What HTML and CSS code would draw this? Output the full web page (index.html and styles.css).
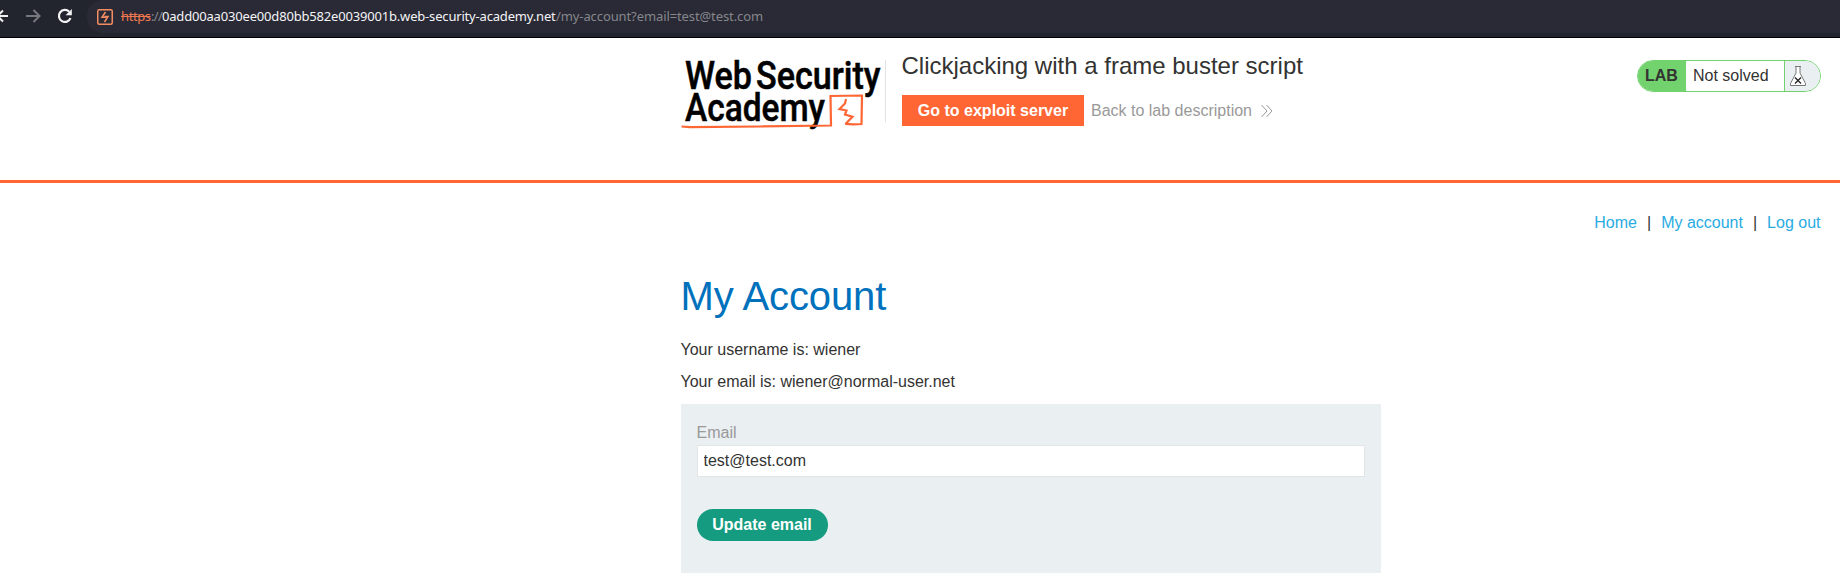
FILE: index.html
```html
<!DOCTYPE html>
<html lang="en">
<head>
<meta charset="utf-8">
<title>Clickjacking with a frame buster script</title>
<link rel="stylesheet" href="styles.css">
</head>
<body>
<div class="browser">
  <div class="browser-buttons">
    <svg class="nav-icons" width="87" height="33" viewBox="0 0 87 33" fill="none" stroke-width="2">
      <path d="M8 16H-4M3 10.500L-2.500 16L3 21.500" stroke="#f0f0f2"/>
      <path d="M26 16H39M33.500 10L39.500 16L33.500 22" stroke="#77787e"/>
      <path d="M70.500 18.200A6 6 0 1 1 69.200 11.700" stroke="#f4f4f6" stroke-width="2.200"/>
      <path d="M71.800 9V15.200H65.600Z" fill="#f4f4f6"/>
    </svg>
  </div>
  <div class="address">
    <svg class="site-icon" width="16" height="16" viewBox="0 0 16 16" fill="none" stroke="#f58c63">
      <rect x=".75" y=".75" width="14.500" height="14.500" rx="1.500" stroke-width="1.500"/>
      <path d="M8.500 3L5 8.300H8.300V7.500H11L7.500 13" stroke-width="1.500"/>
    </svg>
    <span class="scheme">https</span><span class="dim sep">://</span><span class="host">0add00aa030ee00d80bb582e0039001b.web-security-academy.net</span><span class="dim path">/my-account?email=test@test.com</span>
  </div>
</div>
<header class="lab-header">
  <svg class="logo" width="204" height="72" viewBox="681 58 204 72">
    <g class="logo-text">
      <text x="685" y="88.500" textLength="67" lengthAdjust="spacingAndGlyphs">Web</text>
      <text x="756" y="88.500" textLength="124.500" lengthAdjust="spacingAndGlyphs">Security</text>
      <text x="685" y="121" textLength="140" lengthAdjust="spacingAndGlyphs">Academy</text>
    </g>
    <g fill="none" stroke="#ff6633" stroke-width="2.200">
      <path d="M681.500 126.500L690 127.200L760 126.500L831 125.500L830.500 96L862 95.500L861.500 124L853 124.300L845.300 123.800"/>
      <path d="M846 99L845 103.500L839.500 109L846.500 110.500L845 114.500L852.500 116.700L845.500 124"/>
    </g>
  </svg>
  <div class="title-block">
    <h2>Clickjacking with a frame buster script</h2>
    <div class="actions">
      <a class="exploit">Go to exploit server</a>
      <a class="back">Back to lab description
        <svg width="12" height="14" viewBox="0 0 12 14" fill="none" stroke="#999"><path d="M.5 1L6 7L.5 13M5.500 1L11 7L5.500 13"/></svg>
      </a>
    </div>
  </div>
  <div class="status">
    <span class="lab">LAB</span>
    <span class="state">Not solved</span>
    <span class="flask">
      <svg width="18" height="22" viewBox="0 0 18 22" fill="#fff" stroke="#777"><path d="M6 1.500H12M7 1.500V8L1.500 18.500V20.500H16.500V18.500L11 8V1.500"/><path d="M6 12.500L12 18.500M12 12.500L6 18.500" stroke="#222" stroke-width="1.300"/></svg>
    </span>
  </div>
</header>
<nav class="links"><a>Home</a><span>|</span><a>My account</a><span>|</span><a>Log out</a></nav>
<main class="account">
  <h1>My Account</h1>
  <p>Your username is: wiener</p>
  <p>Your email is: wiener@normal-user.net</p>
  <form class="panel">
    <label for="email">Email</label>
    <input id="email" type="email" value="test@test.com">
    <button type="button">Update email</button>
  </form>
</main>
</body>
</html>
```

FILE: styles.css
```css
* { box-sizing: border-box; }
body {
  margin: 0;
  height: 573px;
  overflow: hidden;
  background: #fff;
  color: #333332;
  font: 16px/20px "Liberation Sans", Arial, sans-serif;
}
svg { display: block; flex: none; }

.browser {
  display: flex;
  height: 38px;
  background: #22252e;
  border-bottom: 1px solid #000;
}
.address {
  display: flex;
  flex: 1;
  align-items: center;
  height: 33px;
  padding-left: 10px;
  border-radius: 16px 0 0 16px;
  background: #292a35;
  font: 13px/30px "Noto Sans", sans-serif;
  white-space: nowrap;
}
.address span { padding-bottom: 2px; }
.site-icon { margin-right: 8px; }
.scheme { width: 30px; color: #f07850; letter-spacing: -.4px; text-decoration: line-through; }
.dim { color: #85878c; }
.sep { width: 11px; letter-spacing: -.7px; }
.host { width: 394px; color: #f4f4f6; letter-spacing: -.18px; }
.path { letter-spacing: -.1px; }

.lab-header {
  display: flex;
  height: 145px;
  padding: 20px 19px 0 681px;
  border-bottom: 3px solid #ff6633;
}
.logo { overflow: visible; }
.logo-text {
  font: 500 38px Roboto, sans-serif;
  fill: #000;
  stroke: #000;
  stroke-width: .5px;
}
.title-block {
  height: 62px;
  margin-top: 2px;
  padding-left: 16px;
  border-left: 1px solid #e2e2e2;
}
.title-block h2 {
  margin: -7px 0 0 -.5px;
  font-size: 24px;
  font-weight: 400;
  line-height: 26px;
}
.actions {
  display: flex;
  align-items: center;
  margin-top: 16px;
}
.exploit {
  width: 182px;
  height: 31px;
  margin-right: 7px;
  background: #ff6633;
  color: #fff;
  font-weight: 700;
  line-height: 31px;
  text-align: center;
}
.back {
  display: flex;
  align-items: center;
  gap: 9px;
  color: #999;
}
.status {
  display: flex;
  width: 184px;
  height: 32px;
  margin: 2px 0 0 auto;
  border: 1px solid #72d26e;
  border-radius: 16px;
  overflow: hidden;
  line-height: 30px;
}
.lab {
  width: 48px;
  padding-left: 7px;
  background: #72d26e;
  font-weight: 700;
}
.state { flex: 1; padding-left: 7px; line-height: 29px; }
.flask {
  width: 36px;
  padding: 4px 0 0 4px;
  border-left: 1px solid #72d26e;
  background: #eaeff2;
}

.links {
  display: flex;
  justify-content: flex-end;
  gap: 10px;
  padding: 30px 19.5px 0 0;
}
.links a { color: #29abe2; }

.account { width: 700px; margin: 41px 0 0 680.5px; }
.account h1 {
  margin: 0 0 22px;
  color: #0071bc;
  font-size: 40px;
  font-weight: 400;
  letter-spacing: -.1px;
  line-height: 44px;
}
.account p { margin: 0 0 12px; }
.panel {
  display: flex;
  flex-direction: column;
  align-items: flex-start;
  height: 190px;
  padding: 19px 16px;
  background: #eaeff2;
}
.panel label { height: 22px; color: #999; }
.panel input {
  width: 668px;
  height: 32px;
  padding: 0 6px;
  border: 1px solid #e2e4e6;
  background: #fff;
  color: #333332;
  font: inherit;
}
.panel button {
  width: 131px;
  height: 32px;
  margin-top: 32px;
  padding: 0;
  border: 0;
  border-radius: 16px;
  background: #159c80;
  color: #fff;
  font: 700 16px "Liberation Sans", Arial, sans-serif;
}
```
